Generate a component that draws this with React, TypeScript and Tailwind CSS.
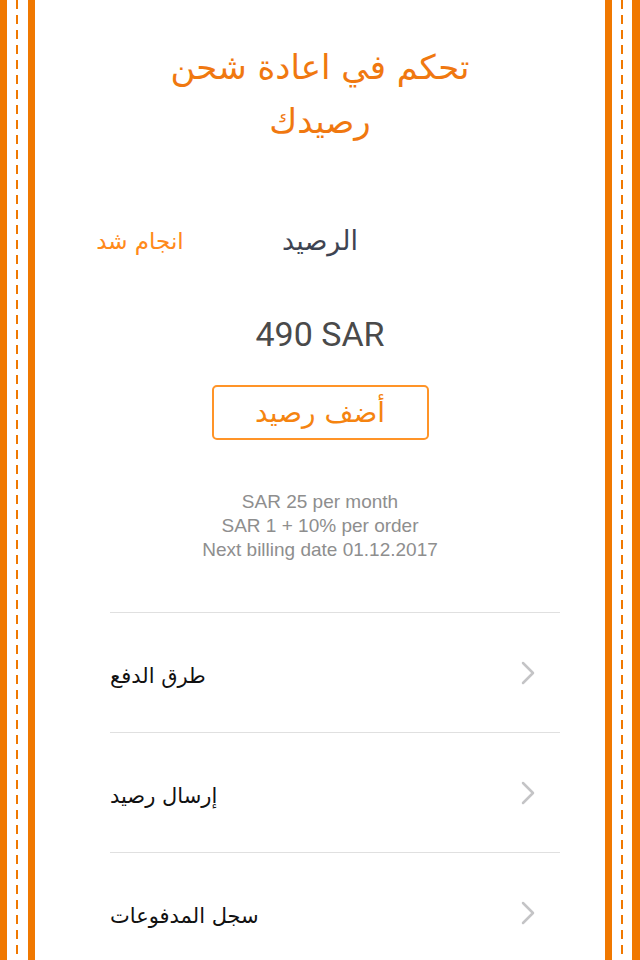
import React from 'react'

const arabic = "font-['DejaVu_Sans',sans-serif]"

function Strip({ side }: { side: 'left' | 'right' }) {
  const dash = (
    <div className="w-[2px] bg-[repeating-linear-gradient(to_bottom,#f07800_0px,#f07800_9px,transparent_9px,transparent_15px)]" />
  )
  if (side === 'left') {
    return (
      <div className="flex w-[35px] shrink-0">
        <div className="w-[7px] bg-[#f07800]" />
        <div className="w-[9px]" />
        {dash}
        <div className="w-[10px]" />
        <div className="w-[7px] bg-[#f07800]" />
      </div>
    )
  }
  return (
    <div className="flex w-[35px] shrink-0">
      <div className="w-[7px] bg-[#f07800]" />
      <div className="w-[9px]" />
      {dash}
      <div className="w-[9px]" />
      <div className="w-[8px] bg-[#f07800]" />
    </div>
  )
}

function Chevron() {
  return (
    <svg width="14" height="24" viewBox="0 0 14 24" fill="none">
      <polyline
        points="2,2 12,12 2,22"
        stroke="#c4c4c6"
        strokeWidth="2.5"
        strokeLinecap="round"
        strokeLinejoin="round"
      />
    </svg>
  )
}

const menuItems = ['طرق الدفع', 'إرسال رصيد', 'سجل المدفوعات']

export default function App() {
  return (
    <div className="flex h-[960px] w-[640px] overflow-hidden bg-white">
      <Strip side="left" />
      <div className="flex flex-1 flex-col">
        <h1
          dir="rtl"
          className={`${arabic} pt-[40px] text-center text-[34px] leading-[54px] text-[#f07810]`}
        >
          تحكم في اعادة شحن
          <br />
          رصيدك
        </h1>

        <div className="mt-[78px] ml-[15px] flex">
          <div dir="rtl" className={`${arabic} w-[180px] text-center text-[23px] leading-[30px] text-[#ff8a1a]`}>
            انجام شد
          </div>
          <div dir="rtl" className={`${arabic} w-[180px] text-center text-[27px] leading-[30px] text-[#3e4452]`}>
            الرصيد
          </div>
        </div>

        <div className="mt-[58px] text-center font-['Roboto',sans-serif] text-[34px] leading-[40px] text-[#4a4a4a]">
          490 SAR
        </div>

        <div className="mt-[31px] flex justify-center">
          <button
            dir="rtl"
            className={`${arabic} flex h-[55px] w-[217px] items-center justify-center rounded-[5px] border-2 border-[#ff9428] text-[28px] text-[#f58410]`}
          >
            أضف رصيد
          </button>
        </div>

        <div className="mt-[50px] text-center font-['Liberation_Sans',sans-serif] text-[19px] leading-[24px] text-[#8e8e8e]">
          <p>SAR 25 per month</p>
          <p>SAR 1 + 10% per order</p>
          <p>Next billing date 01.12.2017</p>
        </div>

        <ul className="mt-[50px] ml-[75px] mr-[45px]">
          {menuItems.map((item) => (
            <li
              key={item}
              className="flex h-[120px] items-center justify-between border-t border-[#e0e0e0] pr-[25px]"
            >
              <span dir="rtl" className={`${arabic} pt-[8px] text-[21px] text-[#111111]`}>
                {item}
              </span>
              <Chevron />
            </li>
          ))}
        </ul>
      </div>
      <Strip side="right" />
    </div>
  )
}
